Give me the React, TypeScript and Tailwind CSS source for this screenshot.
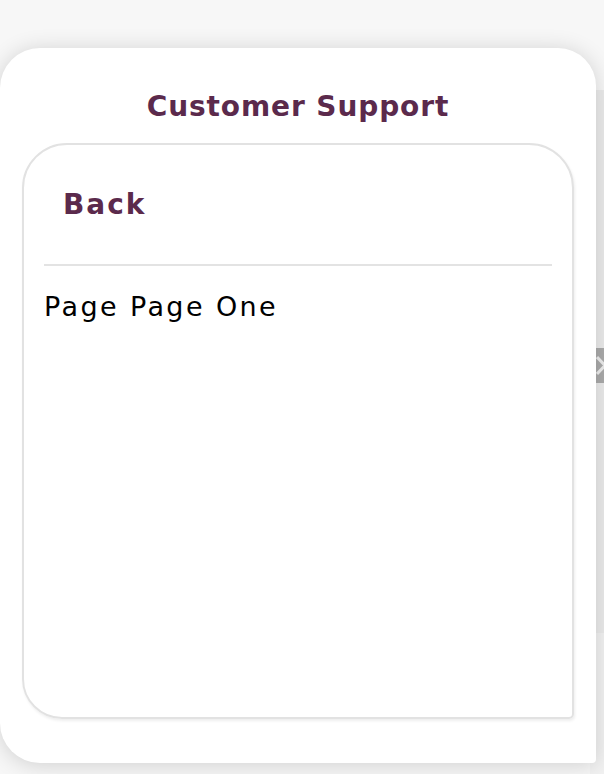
import React from "react";

export default function App() {
  const font = { fontFamily: '"DejaVu Sans", "Liberation Sans", sans-serif' };
  return (
    <div className="relative w-[604px] h-[774px] overflow-hidden bg-[#f7f7f7]" style={font}>
      {/* right backdrop strip */}
      <div className="absolute left-[590px] top-[90px] w-[20px] h-[543px] bg-[#ebebeb]" />
      <div className="absolute left-[590px] top-[633px] w-[20px] h-[141px] bg-[#f2f2f2]" />
      {/* clipped carousel next button */}
      <div className="absolute left-[596px] top-[348px] w-[16px] h-[35px] bg-[#ababab] flex items-center">
        <svg width="16" height="35" viewBox="0 0 16 35">
          <path d="M1 9 L9 17.5 L1 26" fill="none" stroke="#ededed" strokeWidth="3" />
        </svg>
      </div>

      <div className="relative pt-[48px]">
        <div className="w-[596px] h-[715px] bg-white rounded-tl-[40px] rounded-tr-[38px] rounded-bl-[40px] rounded-br-[4px] shadow-[0_2px_22px_rgba(0,0,0,0.16)] flex flex-col pt-[42px] px-[22px]">
          <h1 className="text-[28px] leading-[34px] font-bold text-[#5b2a4c] text-center tracking-[0.9px]">
            Customer Support
          </h1>
          <div className="mt-[19px] h-[576px] border-2 border-[#e2e2e2] rounded-tl-[45px] rounded-tr-[45px] rounded-bl-[40px] rounded-br-[5px] shadow-[1px_2px_3px_rgba(0,0,0,0.07)] flex flex-col pt-[43px]">
            <div className="pl-[39px] text-[28px] leading-[34px] font-bold text-[#5b2a4c] tracking-[2px]">
              Back
            </div>
            <div className="mt-[42px] mx-[20px] h-[2px] bg-[#e3e3e3]" />
            <div className="mt-[25px] pl-[20px] text-[27px] leading-[32px] text-black tracking-[2.4px]">
              Page Page One
            </div>
          </div>
        </div>
      </div>
    </div>
  );
}
